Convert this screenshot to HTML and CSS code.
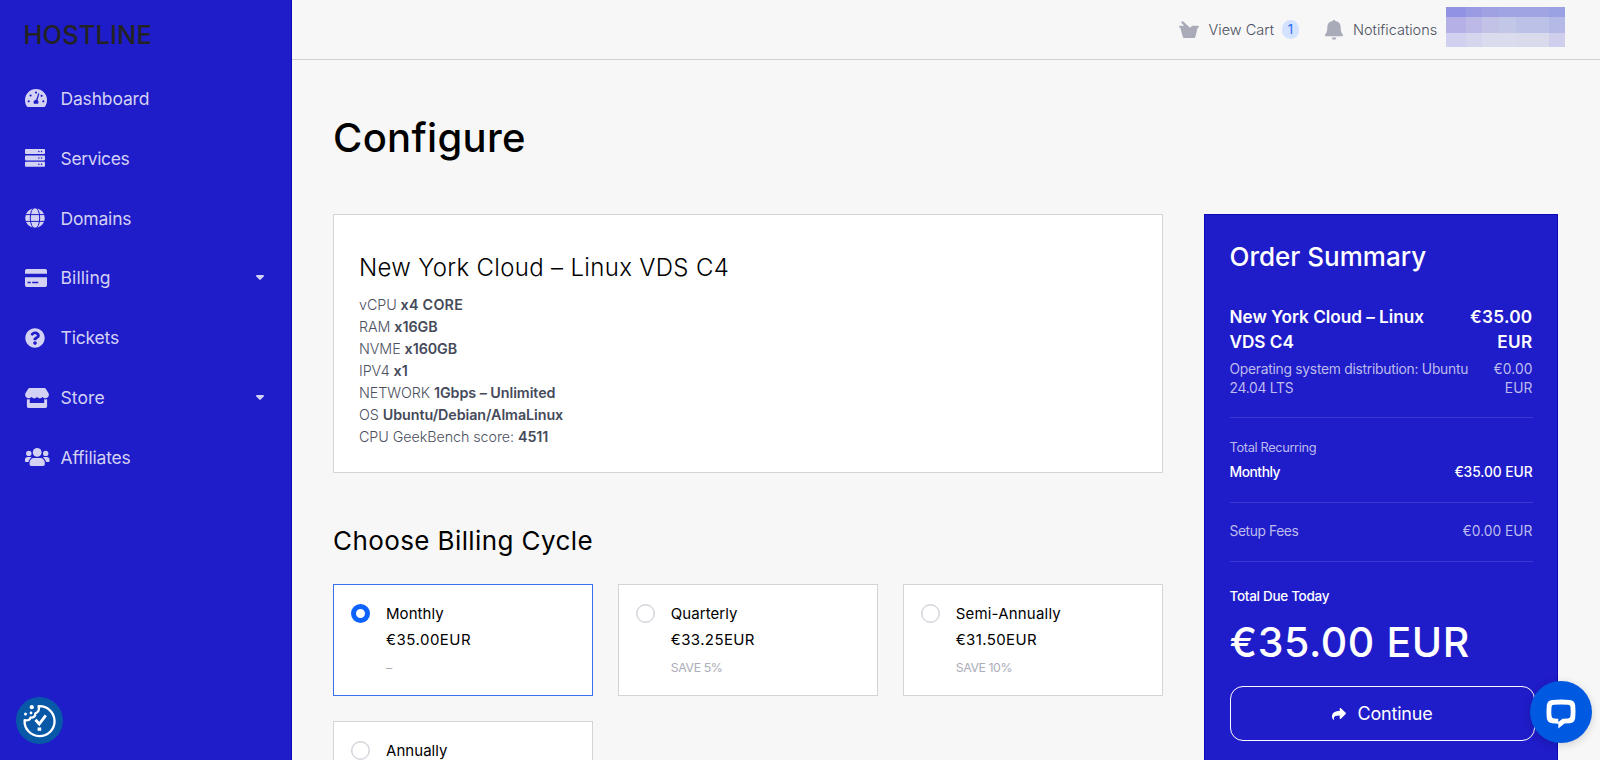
FILE: index.html
```
<!DOCTYPE html>
<html lang="en">
<head>
<meta charset="utf-8">
<title>Configure - Hostline</title>
<link rel="stylesheet" href="styles.css">
</head>
<body>
<div class="app">
  <aside class="sidebar">
    <div class="logo">HOSTLINE</div>
    <nav class="menu">
      <a class="menu-item">
        <span class="menu-icon"><svg width="22" height="18" viewBox="0 0 22 18"><path fill="currentColor" d="M11 0a11 11 0 0 1 11 11c0 2.300-.6 4.300-1.700 6.200-.3.500-.7.800-1.300.800H3c-.6 0-1-.300-1.300-.800A11.500 11.500 0 0 1 0 11 11 11 0 0 1 11 0z"/><g fill="#1f1cc9"><circle cx="3.700" cy="12.300" r="1.100"/><circle cx="5.600" cy="6.500" r="1.100"/><circle cx="11" cy="3.600" r="1.100"/><circle cx="16.600" cy="6.800" r="1.100"/><circle cx="18.300" cy="12.300" r="1.100"/><path d="M13.300 4.200l1.100.4-1.900 6.600c.8.600 1.100 1.500.9 2.600l-.4 1H9l-.4-1c-.2-1.700.9-2.900 2.600-3z"/></g></svg></span>
        <span>Dashboard</span>
      </a>
      <a class="menu-item tight">
        <span class="menu-icon"><svg width="20" height="18" viewBox="0 0 20 18"><g fill="currentColor"><rect width="20" height="5" rx=".8"/><rect y="6.400" width="20" height="5" rx=".8"/><rect y="12.800" width="20" height="5" rx=".8"/></g><g fill="#1f1cc9"><circle cx="13.900" cy="2.500" r=".75"/><circle cx="16.500" cy="2.500" r=".75"/><circle cx="13.900" cy="8.900" r=".75"/><circle cx="16.500" cy="8.900" r=".75"/><circle cx="13.900" cy="15.300" r=".75"/><circle cx="16.500" cy="15.300" r=".75"/></g></svg></span>
        <span>Services</span>
      </a>
      <a class="menu-item">
        <span class="menu-icon"><svg width="20" height="20" viewBox="0 0 20 20"><circle cx="10" cy="10" r="9.800" fill="currentColor"/><g fill="none" stroke="#1f1cc9" stroke-width="1"><ellipse cx="10" cy="10" rx="4.700" ry="10.600"/><path d="M0 6.600h20M0 13.400h20"/></g></svg></span>
        <span>Domains</span>
      </a>
      <a class="menu-item">
        <span class="menu-icon"><svg width="22" height="18" viewBox="0 0 22 18"><path fill="currentColor" fill-rule="evenodd" d="M1.700 0h18.600A1.700 1.700 0 0 1 22 1.700V4.700H0V1.700A1.700 1.700 0 0 1 1.700 0zM0 8.300h22v8a1.700 1.700 0 0 1-1.700 1.700H1.700A1.700 1.700 0 0 1 0 16.300zM2.500 12.700v1.500h3.300v-1.500zM7.200 12.700v1.500h6v-1.500z"/></svg></span>
        <span class="wide">Billing</span>
        <svg class="caret" width="8" height="5" viewBox="0 0 8 5"><path fill="currentColor" d="M1 0h6c.8 0 1.200.9.700 1.500L4.700 4.600a1 1 0 0 1-1.400 0L.3 1.500C-.2.900.2 0 1 0z"/></svg>
      </a>
      <a class="menu-item">
        <span class="menu-icon"><svg width="20" height="20" viewBox="0 0 512 512"><path fill="currentColor" d="M504 256c0 137-111 248-248 248S8 393 8 256 119 8 256 8s248 111 248 248zM262.700 90c-54.500 0-89.300 23-116.500 63.800-3.500 5.300-2.400 12.400 2.700 16.300l34.700 26.300c5.200 3.900 12.600 3 16.700-2.100 17.900-22.700 30.100-35.800 57.300-35.800 20.400 0 45.700 13.100 45.700 33 0 15-12.400 22.700-32.500 34C247.100 238.500 216 254.900 216 296v4c0 6.600 5.400 12 12 12h56c6.600 0 12-5.400 12-12v-1.300c0-28.500 83.200-29.600 83.200-106.700 0-58-60.200-102-116.500-102zM256 338c-25.400 0-46 20.600-46 46s20.600 46 46 46 46-20.600 46-46-20.600-46-46-46z"/></svg></span>
        <span>Tickets</span>
      </a>
      <a class="menu-item">
        <span class="menu-icon"><svg width="24" height="20" viewBox="0 0 24 20"><path fill="currentColor" d="M4.600 0h14.800c.5 0 .9.200 1.200.6l2.700 4.200c1.400 2.200.2 5.200-2.400 5.500h-.6a4 4 0 0 1-2.800-1.200 4 4 0 0 1-5.500 0 4 4 0 0 1-5.500 0 4 4 0 0 1-3.400 1.200C.5 10-.7 7 .7 4.800L3.400.6c.3-.4.700-.6 1.200-.6zM1.900 11.300c.7.200 2 .2 2.900 0V15h14.400v-3.700c.9.200 2.100.2 2.900 0v7c0 .9-.7 1.700-1.600 1.700h-17c-.9 0-1.600-.8-1.600-1.700z"/></svg></span>
        <span class="wide">Store</span>
        <svg class="caret" width="8" height="5" viewBox="0 0 8 5"><path fill="currentColor" d="M1 0h6c.8 0 1.200.9.700 1.500L4.700 4.600a1 1 0 0 1-1.400 0L.3 1.500C-.2.900.2 0 1 0z"/></svg>
      </a>
      <a class="menu-item">
        <span class="menu-icon"><svg width="25" height="18" viewBox="0 0 25 18"><g fill="currentColor"><circle cx="12.200" cy="4.400" r="4.400"/><circle cx="3.800" cy="5.400" r="2.700"/><circle cx="20.700" cy="5.400" r="2.700"/><path d="M9.400 10h5.600c2.700 0 4.800 2.100 4.800 4.800v1.500c0 1-.7 1.700-1.700 1.700H6.300c-1 0-1.700-.7-1.700-1.700v-1.500C4.600 12.100 6.700 10 9.400 10zM2.600 9h2.500c.7 0 1.200.2 1.700.6-1.800 1-3 2.500-3.300 4.500H1c-.6 0-1-.5-1-1.200v-1.300C0 10.200 1.200 9 2.600 9zM19.400 9h2.500c1.500 0 2.600 1.200 2.600 2.600v1.300c0 .7-.4 1.200-1.100 1.200H21c-.3-2-1.500-3.500-3.300-4.500.5-.4 1-.6 1.700-.6z"/></g></svg></span>
        <span>Affiliates</span>
      </a>
    </nav>
  </aside>

  <div class="page">
    <header class="topbar">
      <a class="top-link cart">
        <svg width="20" height="17" viewBox="0 0 20 17"><path fill="currentColor" d="M1 4.700h4.200L2.100 1.600 3.700 0l7.400 6.700 2-2H19c.6 0 1 .4.900 1l-.4 1.100h-.8L16.300 16c-.2.500-.6.900-1.200.9H4.900c-.5 0-1-.4-1.100-.9L1.300 6.800H.7L.1 5.700c-.1-.5.300-1 .9-1z"/></svg>
        <span>View Cart</span><span class="badge">1</span>
      </a>
      <a class="top-link bell">
        <svg width="18" height="20" viewBox="0 0 18 20"><path fill="currentColor" d="M9 0c.8 0 1.300.5 1.300 1 3.600.6 5.400 3 5.400 6 0 4.200.6 5.600 1.900 7.200.9 1 .2 2.100-.9 2.100H1.300c-1.100 0-1.800-1.100-.9-2.100C1.700 12.600 2.300 11.200 2.300 7c0-3 1.800-5.400 5.400-6C7.700.5 8.200 0 9 0zM6.700 17.500h4.600a2.300 2.300 0 0 1-4.600 0z"/></svg>
        <span>Notifications</span>
      </a>
      <div class="account">
        <i class="p1"></i><i class="p2"></i><i class="p3"></i><i class="p4"></i><i class="p4"></i><i class="p5"></i>
        <i class="q1"></i><i class="q2"></i><i class="q3"></i><i class="q4"></i><i class="q5"></i><i class="q6"></i>
        <i class="r1"></i><i class="r2"></i><i class="r3"></i><i class="r3"></i><i class="r4"></i><i class="r5"></i>
      </div>
    </header>

    <main class="content">
      <h1>Configure</h1>
      <div class="columns">
        <div class="main-col">
          <section class="product">
            <h2>New York Cloud – Linux VDS C4</h2>
            <ul class="specs">
              <li>vCPU <b class="wide">x4 CORE</b></li>
              <li>RAM <b>x16GB</b></li>
              <li>NVME <b>x160GB</b></li>
              <li>IPV4 <b>x1</b></li>
              <li>NETWORK <b>1Gbps – Unlimited</b></li>
              <li>OS <b>Ubuntu/Debian/AlmaLinux</b></li>
              <li>CPU GeekBench score: <b>4511</b></li>
            </ul>
          </section>
          <h3>Choose Billing Cycle</h3>
          <div class="cycles">
            <label class="cycle selected"><span class="radio"></span><span class="cycle-body"><span class="cycle-name">Monthly</span><span class="cycle-price">€35.00EUR</span><span class="cycle-save">–</span></span></label>
            <label class="cycle"><span class="radio"></span><span class="cycle-body"><span class="cycle-name">Quarterly</span><span class="cycle-price narrow">€33.25EUR</span><span class="cycle-save">SAVE 5%</span></span></label>
            <label class="cycle"><span class="radio"></span><span class="cycle-body"><span class="cycle-name semi">Semi-Annually</span><span class="cycle-price narrow">€31.50EUR</span><span class="cycle-save">SAVE 10%</span></span></label>
            <label class="cycle"><span class="radio"></span><span class="cycle-body"><span class="cycle-name">Annually</span></span></label>
          </div>
        </div>

        <aside class="summary">
          <h2>Order Summary</h2>
          <div class="row product-row"><span>New York Cloud – Linux<br>VDS C4</span><span class="amount">€35.00<br>EUR</span></div>
          <div class="row option-row"><span>Operating system distribution: Ubuntu<br>24.04 LTS</span><span class="amount">€0.00<br>EUR</span></div>
          <div class="recurring">
            <div class="caption">Total Recurring</div>
            <div class="row recurring-row"><span class="term">Monthly</span><span>€35.00 EUR</span></div>
          </div>
          <div class="row setup-row"><span class="fees">Setup Fees</span><span>€0.00 EUR</span></div>
          <div class="due">
            <div class="due-label">Total Due Today</div>
            <div class="due-amount">€35.00 EUR</div>
          </div>
          <button class="continue">
            <svg width="14" height="12" viewBox="0 0 14 12"><path fill="currentColor" d="M13.700 4.700L8.900.2C8.400-.2 7.700.1 7.700.7V3C3.500 3.100 0 4.300 0 8.500c0 1.500.8 2.700 1.400 3.300.2.200.7 0 .6-.4C1.300 8.300 3.200 7.500 7.700 7.500v2.700c0 .6.700.9 1.200.5l4.800-4.700c.4-.4.400-.9 0-1.300z"/></svg>
            <span>Continue</span>
          </button>
        </aside>
      </div>
    </main>
  </div>
</div>

<div class="cookie"><svg width="47" height="47" viewBox="0 0 47 47"><g fill="none" stroke="#fff" stroke-width="2.300" stroke-linejoin="round" stroke-linecap="round"><path d="M22.500 9.200A15 15 0 1 1 8.600 23.200c3 .7 5.500-.2 6-2.700 3 .3 5-1.300 4.700-4.200 3-.6 4.300-3.600 3.200-7.100z"/></g><path fill="none" stroke="#fff" stroke-width="2.800" d="M19.500 22.800l3.700 4.200 6.600-8.700"/><g fill="#fff"><rect x="21.600" y="30.500" width="3.600" height="3.300"/><circle cx="15.800" cy="10.200" r="2.100"/><circle cx="9.500" cy="17" r="1.500"/><circle cx="15" cy="16" r="1.400"/></g></svg></div>
<div class="chat"><svg width="30" height="30" viewBox="0 0 30 30"><path fill="#fff" fill-rule="evenodd" d="M6.200.9Q15 .1 23.800.9 28.700 1.400 29.200 6.200 29.800 12.500 29.200 19 28.700 23.700 23.800 24.200L18.500 24.600 12.300 29.600V24.700L6.200 24.200Q1.300 23.700.8 19 .2 12.500.8 6.200 1.300 1.400 6.200.9zM8 5.700Q5.700 5.800 5.500 8 5.100 12.500 5.500 17 5.700 19.300 8 19.400L12.300 19.800V23L16.500 19.800 22 19.400Q24.300 19.300 24.500 17 24.900 12.500 24.500 8 24.300 5.800 22 5.700 15 5.100 8 5.700z"/></svg></div>
</body>
</html>
```
FILE: styles.css
```
* { box-sizing: border-box; }
body {
  margin: 0;
  height: 760px;
  overflow: hidden;
  background: #f7f7f7;
  color: #000;
  font-family: Inter, "Liberation Sans", sans-serif;
}
h1, h2, h3, ul { margin: 0; padding: 0; font-weight: 400; }
svg { display: block; }
.app { display: flex; height: 760px; overflow: hidden; }

/* Sidebar */
.sidebar { flex: none; width: 291.500px; background: #1f1cc9; border-right: 1px solid #0d08ba; }
.logo {
  height: 68.500px;
  padding: 15px 0 0 23.500px;
  font-size: 25.500px;
  line-height: 40px;
  font-weight: 500;
  letter-spacing: .1px;
  color: #232323;
}
.menu { display: flex; flex-direction: column; }
.menu-item {
  display: flex;
  align-items: center;
  height: 59.850px;
  padding: 0 26.500px 0 25px;
  font-size: 17.500px;
  letter-spacing: -.17px;
  color: #d3d2f4;
}
.menu-item.tight { letter-spacing: -.35px; }
.menu-item .wide { letter-spacing: .1px; }
.menu-icon { width: 35.500px; }
.caret { margin-left: auto; }

/* Top bar */
.page { flex: 1; min-width: 0; }
.topbar {
  display: flex;
  align-items: center;
  height: 60px;
  padding-left: 887.500px;
  border-bottom: 1px solid #d1d1d3;
}
.top-link {
  display: flex;
  align-items: center;
  font-size: 14.500px;
  font-weight: 300;
  letter-spacing: 0;
  color: #4b5060;
}
.top-link svg { color: #a9abb8; }
.cart svg { margin-right: 9.500px; }
.bell { margin-left: 26px; }
.bell svg { margin-right: 10px; }
.badge {
  margin-left: 8px;
  width: 17px;
  height: 19px;
  border-radius: 9px;
  background: #d3e2ff;
  color: #2a6bf5;
  font-size: 13px;
  line-height: 19px;
  font-weight: 400;
  text-align: center;
}
.account {
  display: grid;
  grid-template: 10px 16.500px 13.500px / 20px 16px 17px 17px 33px 16px;
  margin: -6px 0 0 9px;
}
.p1 { background: #9192e1; } .p2 { background: #9a9be2; } .p3 { background: #a0a1e2; }
.p4 { background: #a1a4e3; } .p5 { background: #9ba2e3; }
.q1 { background: #b5b1e7; } .q2 { background: #bcb9e7; } .q3 { background: #c2c2e7; }
.q4 { background: #c2c7e8; } .q5 { background: #bcc1e8; } .q6 { background: #b5b9e5; }
.r1 { background: #d1d0ef; } .r2 { background: #d5d5ee; } .r3 { background: #dadbec; }
.r4 { background: #d9dbec; } .r5 { background: #cfceec; }

/* Content */
.content { padding: 0 42px 0 41.500px; }
h1 { padding-top: 48px; height: 154px; font-size: 40px; line-height: 60px; font-weight: 450; letter-spacing: .3px; }
.columns { display: flex; gap: 41.500px; align-items: flex-start; }
.main-col { width: 829.500px; flex: none; }
.product { height: 259px; padding: 34px 25px 0; background: #fff; border: 1px solid #d4d4d6; }
.product h2 { font-size: 24px; line-height: 38px; font-weight: 300; letter-spacing: .32px; }
.specs {
  margin-top: 7px;
  list-style: none;
  font-size: 14.300px;
  line-height: 21.950px;
  font-weight: 300;
  letter-spacing: -.06px;
  color: #4b5060;
}
.specs b { font-weight: 600; color: #454a5a; }
.specs .wide { letter-spacing: .25px; }
h3 { margin-top: 48px; font-size: 26px; line-height: 40px; letter-spacing: .4px; }
.cycles { display: grid; grid-template-columns: repeat(3, 1fr); gap: 25px; margin-top: 23px; }
.cycle { display: flex; height: 112px; padding: 16px; background: #fff; border: 1px solid #d4d4d6; }
.cycle.selected { border-color: #3a6ff2; }
.radio { flex: none; width: 19px; height: 19px; margin: 3px 16px 0 1px; border: 1.500px solid #d0d1d8; border-radius: 50%; box-shadow: inset 0 0 0 .5px #d0d1d8; }
.selected .radio { border: 5.500px solid #0e62fd; box-shadow: none; }
.cycle-body { display: flex; flex-direction: column; }
.cycle-name { font-size: 15px; line-height: 26px; letter-spacing: .05px; }
.cycle-name.semi { letter-spacing: .2px; }
.cycle-price { font-size: 15px; line-height: 25px; letter-spacing: .5px; }
.cycle-price.narrow { letter-spacing: .38px; }
.cycle-save { margin-top: 6px; font-size: 12.300px; line-height: 20px; letter-spacing: -.4px; color: #abadb9; }

/* Order summary */
.summary {
  flex: none;
  width: 354px;
  height: 600px;
  padding: 22px 24.500px 0;
  background: #1f1cc9;
  border: 1px solid #0d08ba;
  color: #fff;
}
.summary h2 { font-size: 26px; line-height: 40px; font-weight: 500; letter-spacing: 0; }
.row { display: flex; justify-content: space-between; }
.amount { text-align: right; }
.product-row { margin-top: 27px; font-size: 17.200px; line-height: 25px; font-weight: 600; letter-spacing: -.03px; }
.product-row .amount { letter-spacing: .3px; }
.option-row {
  margin-top: 6px;
  padding-bottom: 19px;
  font-size: 13.800px;
  line-height: 19px;
  letter-spacing: -.25px;
  color: #bcbbee;
  border-bottom: 1px solid #3a37cf;
}
.option-row .amount { letter-spacing: .1px; }
.recurring { padding: 18px 0 17px; border-bottom: 1px solid #3a37cf; }
.caption { font-size: 12.800px; line-height: 24px; letter-spacing: -.35px; color: #bcbbee; }
.recurring-row { font-size: 13.800px; line-height: 25px; font-weight: 500; letter-spacing: -.08px; }
.recurring-row .term { letter-spacing: -.45px; }
.setup-row { height: 59px; font-size: 13.800px; line-height: 57px; letter-spacing: 0; color: #bcbbee; border-bottom: 1px solid #3a37cf; }
.fees { letter-spacing: -.4px; }
.due-label { padding-top: 22px; font-size: 13.500px; line-height: 25px; font-weight: 500; letter-spacing: -.3px; }
.due-amount { margin-top: 8px; font-size: 41px; line-height: 50px; font-weight: 500; letter-spacing: .6px; }
.continue {
  display: flex;
  align-items: center;
  justify-content: center;
  gap: 12px;
  width: 305px;
  height: 55px;
  margin: 19px 0 0;
  padding: 0;
  border: 1px solid #fff;
  border-radius: 13px;
  background: none;
  color: #fff;
  font: 400 18px Inter, "Liberation Sans", sans-serif;
  letter-spacing: -.2px;
}

/* Floating widgets */
.cookie { position: absolute; left: 16px; bottom: 16px; width: 47px; height: 47px; border-radius: 50%; background: #0858a8; }
.chat {
  position: absolute;
  left: 1529.500px;
  top: 681px;
  display: flex;
  align-items: center;
  justify-content: center;
  width: 62px;
  height: 62px;
  padding-top: 3px;
  border-radius: 50%;
  background: #0059e1;
  box-shadow: 0 2px 8px rgba(0, 0, 0, .16);
}
```
